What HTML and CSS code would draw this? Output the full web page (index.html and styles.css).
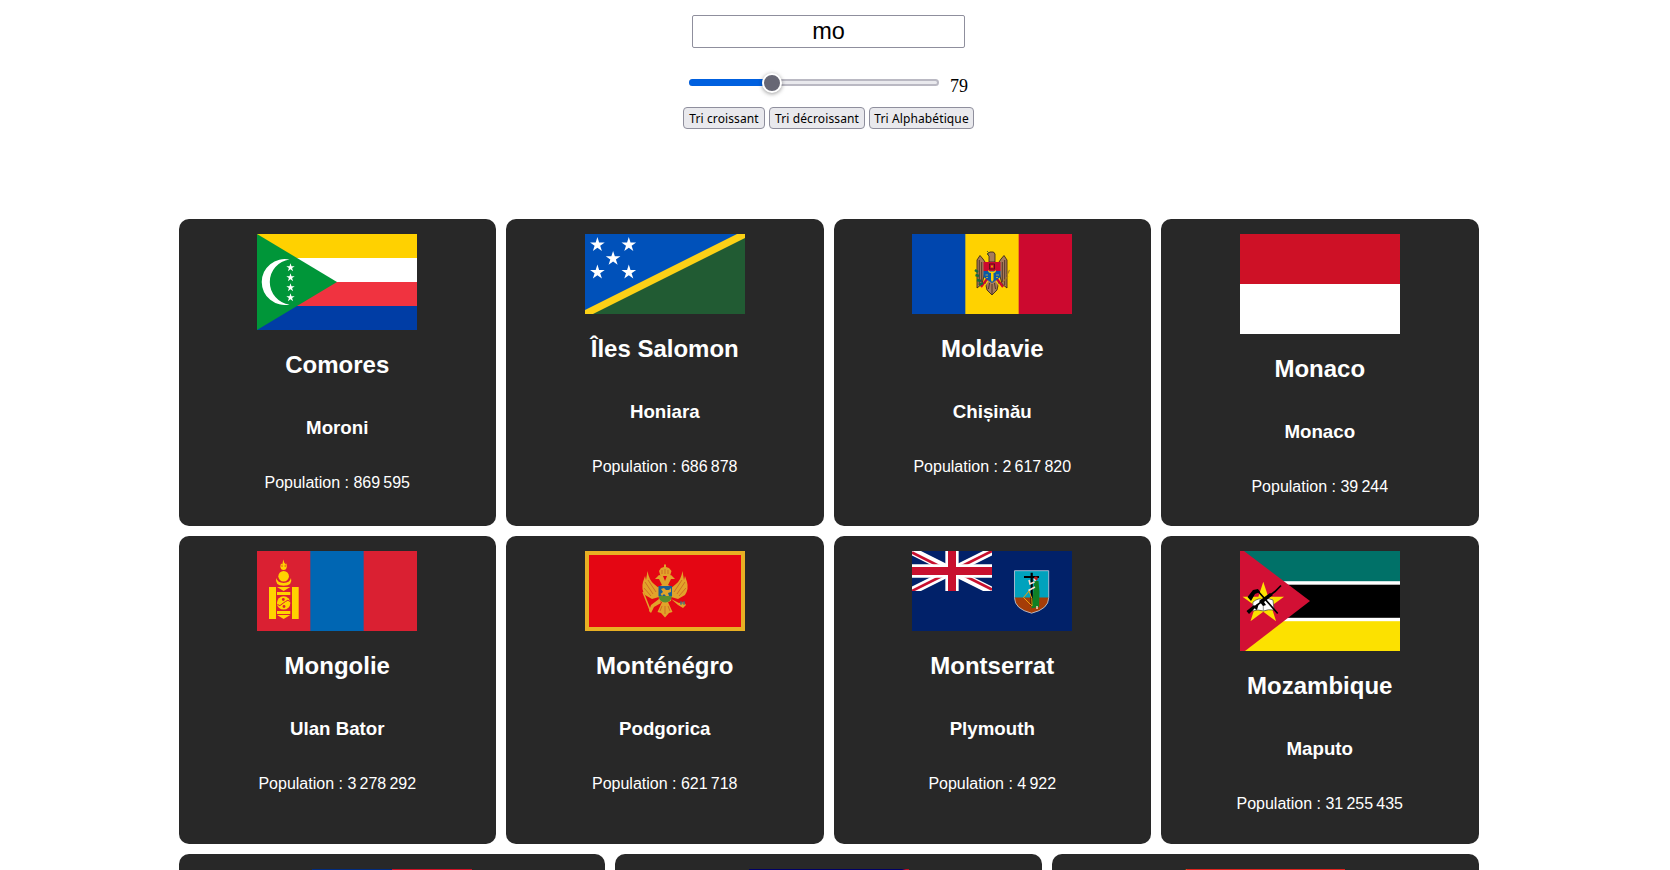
FILE: index.html
```html
<!DOCTYPE html>
<html lang="fr">
<head>
<meta charset="utf-8">
<title>Pays du monde</title>
<link rel="stylesheet" href="styles.css">
</head>
<body>
<svg class="defs" width="0" height="0" aria-hidden="true">
  <defs>
    <path id="star" d="M0-1 .2245-.309 .951-.309 .363 .118 .588 .809 0 .382-.588 .809-.363 .118-.951-.309-.2245-.309z"/>
  </defs>
</svg>
<header class="controls">
  <input class="search" type="text" value="mo">
  <div class="range-row">
    <div class="range"><div class="range-fill"></div><div class="range-thumb"></div></div>
    <span class="range-value">79</span>
  </div>
  <div class="buttons">
    <button class="btn b1">Tri croissant</button>
    <button class="btn b2">Tri décroissant</button>
    <button class="btn b3">Tri Alphabétique</button>
  </div>
</header>
<main class="countries">
  <article class="card">
    <svg class="flag" width="160" height="96" viewBox="0 0 160 96">
      <rect width="160" height="24" fill="#ffd100"/><rect y="24" width="160" height="24" fill="#fff"/>
      <rect y="48" width="160" height="24" fill="#f03340"/><rect y="72" width="160" height="24" fill="#003da5"/>
      <path d="M0 0 80 48 0 96z" fill="#009639"/>
      <path d="M32.5 25.5A23 23 0 1 0 32.5 70.5A22.7 22.7 0 0 1 32.5 25.5z" fill="#fff"/>
      <g fill="#fff"><use href="#star" transform="translate(33.5 33.6) scale(4.4)"/><use href="#star" transform="translate(33.5 43.6) scale(4.4)"/><use href="#star" transform="translate(33.5 53.6) scale(4.4)"/><use href="#star" transform="translate(33.5 63.6) scale(4.4)"/></g>
    </svg>
    <h2>Comores</h2><h3>Moroni</h3><p>Population : 869&#8239;595</p>
  </article>
  <article class="card">
    <svg class="flag" width="160" height="80" viewBox="0 0 160 80">
      <rect width="160" height="80" fill="#0051ba"/><path d="M160 0V80H0z" fill="#215b33"/>
      <path d="M0 76 152 0H160V4L8 80H0z" fill="#fcd116"/>
      <g fill="#fff"><use href="#star" transform="translate(12.4 10.8) scale(7.7)"/><use href="#star" transform="translate(43.8 10.8) scale(7.7)"/><use href="#star" transform="translate(28.1 24.6) scale(7.7)"/><use href="#star" transform="translate(12.4 38.3) scale(7.7)"/><use href="#star" transform="translate(43.8 38.3) scale(7.7)"/></g>
    </svg>
    <h2>Îles Salomon</h2><h3>Honiara</h3><p>Population : 686&#8239;878</p>
  </article>
  <article class="card">
    <svg class="flag" width="160" height="80" viewBox="0 0 160 80">
      <rect width="160" height="80" fill="#ffd200"/><rect width="53.33" height="80" fill="#0046ae"/><rect x="106.67" width="53.33" height="80" fill="#cc092f"/>
      <g stroke="#2b1a12" stroke-width=".8">
        <path d="M73 47 80 41 87 47 85 56 80 61 75 56z" fill="#a77b5b"/>
        <path d="M65 26 68 21.5 71 25 73 28V38L70 50 65 54z" fill="#a77b5b"/>
        <path d="M95 26 92 21.5 89 25 87 28V38L90 50 95 54z" fill="#a77b5b"/>
        <path d="M77 28V22L75 20 78 18H81.500L83 20V28z" fill="#a77b5b"/>
      </g>
      <path d="M67.300 26V51M69.700 28V48M92.700 26V51M90.300 28V48M80 50V60M77.500 49 76.500 55M82.500 49 83.500 55" stroke="#3a251a" stroke-width=".8"/>
      <path d="M69 53 75 45M91 53 85 45" stroke="#cc092f" stroke-width="2.200"/>
      <path d="M71 54 76 47M89 54 84 47" stroke="#ffd200" stroke-width="1.200"/>
      <path d="M71.500 28H88.500V37H71.500z" fill="#cc092f"/><path d="M71.500 37H88.500V43L80 49 71.500 43z" fill="#0c5aa8"/>
      <rect x="77.500" y="30" width="5" height="5" fill="none" stroke="#411" stroke-width=".8"/><rect x="79" y="31.500" width="2" height="2" fill="#d9a000"/>
      <path d="M76 36Q76 39 79 39V46L80 48 81.500 46V39Q84 39 84 36L82 37.500H78z" fill="#ffd200"/>
      <path d="M73.500 41H76M84 41H87M74 43.500H76M84 43.500H86" stroke="#b5a642" stroke-width="1"/>
      <path d="M63 36 66 38M63.500 41 67 42M65 46 69 47M67 51 71 49" stroke="#176b3f" stroke-width="2.400"/>
      <path d="M97.500 36 95 41M96 42 91 48" stroke="#a87c1d" stroke-width="1.100"/><path d="M75 17 77 19M75 20 77 21" stroke="#526c28"/>
    </svg>
    <h2>Moldavie</h2><h3>Chișinău</h3><p>Population : 2&#8239;617&#8239;820</p>
  </article>
  <article class="card">
    <svg class="flag" width="160" height="100" viewBox="0 0 160 100"><rect width="160" height="100" fill="#fff"/><rect width="160" height="50" fill="#ce1126"/></svg>
    <h2>Monaco</h2><h3>Monaco</h3><p>Population : 39&#8239;244</p>
  </article>
  <article class="card">
    <svg class="flag" width="160" height="80" viewBox="0 0 160 80">
      <rect width="160" height="80" fill="#da2032"/><rect x="53.330" width="53.330" height="80" fill="#0066b3"/>
      <g fill="#ffd300">
        <path d="M12 36H19V68H12zM35 36H41.700V68H35zM20 41H33.300V44H20zM20 60H33.300V63H20zM20 36H33.300L26.650 40zM20 64H33.300L26.650 68z"/>
        <path d="M26.300 8.500 27.500 12.500 28.300 11.500 28 13.500 29.500 12.500 29.800 15.500Q29.500 19 26.600 19 23.700 19 23.300 15.500L24 12.500 25.300 13.500z"/>
        <circle cx="26.650" cy="25.200" r="5.300"/><path d="M19.300 27Q20.500 31.800 26.650 32 32.800 31.800 34 27 36 34.500 26.650 34.800 17.500 34.500 19.300 27z"/>
        <circle cx="26.650" cy="51.900" r="6.700"/>
      </g>
      <path d="M20.500 53.500Q23 56 25 53L28.500 50.500Q31 48 33 50.500" fill="none" stroke="#da2032" stroke-width="1"/>
      <circle cx="26.300" cy="48.500" r="1.400" fill="#da2032"/><circle cx="27" cy="55.500" r="1.400" fill="#da2032"/>
      <path d="M25 14V16M28.200 14V16" stroke="#da2032" stroke-width=".7"/>
    </svg>
    <h2>Mongolie</h2><h3>Ulan Bator</h3><p>Population : 3&#8239;278&#8239;292</p>
  </article>
  <article class="card">
    <svg class="flag" width="160" height="80" viewBox="0 0 160 80">
      <rect width="160" height="80" fill="#e8b023"/><rect x="4" y="4" width="152" height="72" fill="#e40613"/>
      <g fill="#e2a32a">
        <path d="M62.500 20Q64 29 69 33L75 38 74 46 67 48 60 44Q56 38 58 31L60 25 61 29z"/>
        <path d="M97.500 20Q96 29 91 33L85 38 86 46 93 48 100 44Q104 38 102 31L100 25 99 29z"/>
        <path d="M70 28 74 24 78 25 80 30 82 25 86 24 90 28 86 28 83 34 87 36 86 50 80 52 74 50 73 36 77 34 74 28z"/>
        <path d="M74 48 66 54 64 60 66 62 69 56 76 52zM86 48 93 54 98 57 101 54 99 51 94 52z"/>
        <path d="M77 51H83L87.500 61 84 62 80 66.500 76 62 72.500 61z"/>
        <path d="M74 20 76 17 79 16V13.500H81V16L84 17 86.500 20 85 25H75.500z"/>
      </g>
      <path d="M58 41 65.500 60" stroke="#e2a32a" stroke-width="1.500"/>
      <path d="M60 31 68 43M63 29 71 41M59 37 66 45M100 31 92 43M97 29 89 41M101 37 94 45M77 19V23M80 18V23M83 19V23M77 55 75 60M80 55V63M83 55 85 60" stroke="#c45a20" stroke-width=".7"/>
      <path d="M73.500 35H87V45H73.500z" fill="#1d5e91"/><path d="M73.500 45H87Q86 51 80.200 51.500 74.500 51 73.500 45z" fill="#5c8e2d"/>
      <path d="M76 38 79 37 81 39H84L86 37V41L83 42 84 45H81L79 43 77 45 75.500 43 78 41z" fill="#e2a32a"/>
      <path d="M95 52H100M96 50V54M99 50V54" stroke="#416b7d" stroke-width="1"/>
    </svg>
    <h2>Monténégro</h2><h3>Podgorica</h3><p>Population : 621&#8239;718</p>
  </article>
  <article class="card">
    <svg class="flag" width="160" height="80" viewBox="0 0 160 80">
      <rect width="160" height="80" fill="#012169"/>
      <svg width="80" height="40" viewBox="0 0 80 40">
        <path d="M0 0 80 40M80 0 0 40" stroke="#fff" stroke-width="8"/>
        <path d="M0 1.500 40 21.500M80 38.500 40 18.500M80 0 40 20M0 40 40 20" stroke="#c8102e" stroke-width="2.600"/>
        <path d="M40 0V40M0 20H80" stroke="#fff" stroke-width="13.300"/><path d="M40 0V40M0 20H80" stroke="#c8102e" stroke-width="8"/>
      </svg>
      <path d="M102.500 19.700H136.700V46.700Q136.700 58 119.600 62.200 102.500 58 102.500 46.700z" fill="#00a2bd"/>
      <path d="M102.500 46.500H136.700Q136.700 58 119.600 62.200 102.500 58 102.500 46.500z" fill="#a53d08"/>
      <path d="M102.500 19.700H136.700V46.700Q136.700 58 119.600 62.200 102.500 58 102.500 46.700z" fill="none" stroke="#c9ccdc" stroke-width=".8"/>
      <path d="M119.700 21.700V55M112 26H127" stroke="#000" stroke-width="2.200"/>
      <path d="M122.500 30 126.500 30 127.500 41 127 56 119.500 57.300 121 45 121.500 38z" fill="#118024"/>
      <path d="M122.500 31 118 33 117 29M123 36 116.500 39.500" fill="none" stroke="#ffe0d0" stroke-width="1.500"/>
      <circle cx="123.800" cy="27.500" r="1.900" fill="#b51b1b"/><path d="M122 28 123.500 30" stroke="#ffe0d0" stroke-width="1.500"/>
      <path d="M117 40 111.500 46.500 120 55Q121 47 117 40" fill="none" stroke="#f0a00c" stroke-width="1"/><path d="M125 55V58" stroke="#ffe0d0" stroke-width="1.400"/>
    </svg>
    <h2>Montserrat</h2><h3>Plymouth</h3><p>Population : 4&#8239;922</p>
  </article>
  <article class="card">
    <svg class="flag" width="160" height="100" viewBox="0 0 160 100">
      <rect width="160" height="100" fill="#fff"/><rect width="160" height="30.200" fill="#007168"/><rect y="33.700" width="160" height="33.100" fill="#000"/><rect y="70.200" width="160" height="29.800" fill="#fce100"/>
      <path d="M0 0H4L70 50 5 100H0z" fill="#d21034"/>
      <use href="#star" transform="translate(23.300 52.500) scale(21.800)" fill="#fce100"/>
      <path d="M13 51Q19 46 23 49 28 46 33 49L34 59Q28 58 23.500 60 18 58 12.500 60z" fill="#fff" stroke="#444" stroke-width=".7"/>
      <path d="M23.300 49V60" stroke="#777" stroke-width=".8"/>
      <path d="M17 39 37.700 62.500M8 61 35 40.500 41 34.500" stroke="#000" stroke-width="1.700" fill="none"/>
      <path d="M7.500 46 13 39 18 38 20 41 15 43 11 50zM6.500 60 14 54 16 56 9 63zM19 50 30 42 33 44 24 51 26 54 23 55zM16 54 19 52 17 59 15 58z"/>
    </svg>
    <h2>Mozambique</h2><h3>Maputo</h3><p>Population : 31&#8239;255&#8239;435</p>
  </article>
  <article class="card">
    <svg class="flag" width="160" height="80" viewBox="0 0 160 80"><rect width="160" height="80" fill="#ce1126"/><rect width="80" height="40" fill="#002b7f"/></svg>
  </article>
  <article class="card">
    <svg class="flag" width="160" height="80" viewBox="0 0 160 80"><rect width="160" height="80" fill="#000066"/><path d="M157 0H160V80H157L0 40z" fill="#bd1021"/><path d="M160 2V78L6 40z" fill="#fff"/></svg>
  </article>
  <article class="card">
    <svg class="flag" width="160" height="80" viewBox="0 0 160 80"><rect width="160" height="80" fill="#dc241f"/><path d="M0 0 80 40 0 80z" fill="#ffc726"/><path d="M0 0 53 40 0 80z"/></svg>
  </article>
</main>
</body>
</html>
```

FILE: styles.css
```css
html {
  height: 100%;
  overflow: hidden;
}

body {
  width: 1657px;
  height: 870px;
  margin: 0;
  overflow: hidden;
  background: #fff;
  font-family: "Liberation Serif", serif;
}

.defs {
  display: block;
}

.controls {
  display: flex;
  flex-direction: column;
  align-items: center;
  height: 203.900px;
  padding-top: 15px;
}

.search {
  box-sizing: border-box;
  width: 273px;
  height: 33px;
  padding: 1px 2px;
  border: 1px solid #8f8f9d;
  border-radius: 2px;
  outline: 0;
  font: 23.500px "Liberation Sans", Arial, sans-serif;
  text-align: center;
}

.range-row {
  display: flex;
  align-items: center;
  gap: 11px;
  height: 20px;
  margin-top: 24px;
}

.range {
  position: relative;
  box-sizing: border-box;
  width: 250px;
  height: 7px;
  margin-top: 1px;
  border: 2px solid #bab9c3;
  border-radius: 4px;
  background: #e9e9ed;
}

.range-fill {
  width: 80px;
  height: 7px;
  margin: -2px;
  border-radius: 4px 0 0 4px;
  background: #0060df;
}

.range-thumb {
  position: absolute;
  top: -8px;
  left: 71px;
  box-sizing: border-box;
  width: 20px;
  height: 20px;
  border: 2px solid #fff;
  border-radius: 50%;
  background: #676774;
  background-clip: border-box;
  box-shadow: 0 1px 4px rgba(0, 0, 0, 0.4);
}

.range-value {
  margin-top: 8px;
  font-size: 18px;
  line-height: 20px;
}

.buttons {
  display: flex;
  gap: 4px;
  margin-top: 15px;
}

.btn {
  box-sizing: border-box;
  height: 22px;
  padding: 0;
  border: 1px solid #8f8f9d;
  border-radius: 4px;
  background: #e9e9ed;
  color: #000;
  font: 12px "Noto Sans", sans-serif;
  letter-spacing: 0.12px;
  white-space: nowrap;
}

.b1 { width: 82px; }
.b2 { width: 96px; }
.b3 { width: 105px; }

.countries {
  display: flex;
  flex-wrap: wrap;
  gap: 10px;
  width: 1300px;
  margin: 0 auto;
}

.card {
  box-sizing: border-box;
  display: flex;
  flex: 1 1 300px;
  flex-direction: column;
  align-items: center;
  height: 307.400px;
  padding: 15px;
  border-radius: 10px;
  background: #282828;
  color: #fff;
  font-family: "Liberation Sans", Arial, sans-serif;
}

.flag {
  display: block;
  flex: none;
}

.card h2 {
  margin: 20.900px 0 19.380px;
  font-size: 24px;
  line-height: 28px;
}

.card h3 {
  margin: 18.720px 0 18.900px;
  font-size: 18.720px;
  line-height: 22px;
}

.card p {
  margin: 16px 0;
  font-size: 16px;
  line-height: 18px;
}
```
